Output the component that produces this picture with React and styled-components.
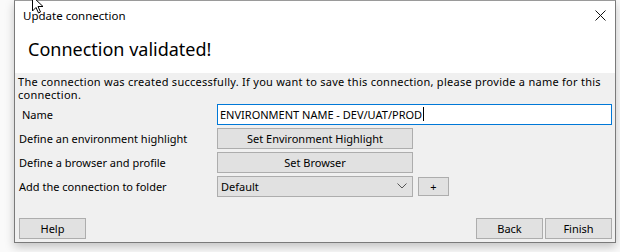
import styled, { createGlobalStyle } from "styled-components";

const Global = createGlobalStyle`
  html, body {
    margin: 0;
    padding: 0;
    background: #ffffff;
  }
  * { box-sizing: border-box; }
`;

const Page = styled.div`
  width: 620px;
  height: 252px;
  padding-left: 14px;
  position: relative;
  overflow: hidden;
  background: #fafafa;
`;

const Window = styled.div`
  width: 602px;
  height: 243px;
  border: 1px solid #7a7a7a;
  border-top-color: #9a9a9a;
  display: flex;
  flex-direction: column;
  background: #f0f0f0;
  box-shadow: 0 4px 9px rgba(0, 0, 0, 0.22);
  font-family: "Noto Sans", "Open Sans", sans-serif;
  color: #000;
`;

const Header = styled.div`
  background: #fff;
  height: 72px;
  display: flex;
  flex-direction: column;
`;

const TitleBar = styled.div`
  height: 31px;
  display: flex;
  align-items: center;
  justify-content: space-between;
  padding: 0 9px 2px 8px;
  font-size: 11.5px;
`;

const CloseX = styled.svg`
  width: 11px;
  height: 11px;
`;

const Heading = styled.h1`
  margin: 0;
  padding: 4px 0 0 13px;
  font-size: 18px;
  font-weight: 400;
  line-height: 26px;
`;

const Body = styled.div`
  flex: 1;
  display: flex;
  flex-direction: column;
  padding: 2px 3px 3px 3px;
  font-size: 11px;
`;

const Description = styled.p`
  margin: 0;
  line-height: 13px;
  height: 27px;
  letter-spacing: 0.26px;
`;

const Form = styled.div`
  display: grid;
  grid-template-columns: 199px 1fr;
  grid-auto-rows: 24px;
  align-items: center;
`;

const Label = styled.div`
  padding-left: ${(p) => (p.$indent ? 4 : 1)}px;
`;

const Controls = styled.div`
  display: flex;
  align-items: center;
  gap: 5px;
`;

const TextInput = styled.div`
  flex: 1;
  height: 21px;
  border: 1px solid #0078d7;
  background: #fff;
  display: flex;
  align-items: center;
  padding-left: 2px;
  font-size: 11px;
`;

const Caret = styled.span`
  display: inline-block;
  width: 1px;
  height: 14px;
  background: #000;
  margin-left: 1px;
`;

const Button = styled.div`
  width: ${(p) => p.$w}px;
  height: ${(p) => p.$h || 21}px;
  border: 1px solid #adadad;
  background: #e1e1e1;
  display: flex;
  align-items: center;
  justify-content: center;
  font-size: 11px;
`;

const Select = styled.div`
  width: 196px;
  height: 21px;
  border: 1px solid #adadad;
  background: #e1e1e1;
  display: flex;
  align-items: center;
  justify-content: space-between;
  padding: 0 5px 0 3px;
`;

const Footer = styled.div`
  margin-top: auto;
  display: flex;
  align-items: center;
  padding-left: 1px;
`;

const FooterRight = styled.div`
  margin-left: auto;
  display: flex;
  gap: 2px;
`;

const Cursor = styled.svg`
  position: absolute;
  left: 32px;
  top: -4px;
  width: 14px;
  height: 18px;
`;

export default function App() {
  return (
    <Page>
      <Global />
      <Window>
        <Header>
          <TitleBar>
            <span>Update connection</span>
            <CloseX viewBox="0 0 11 11">
              <path d="M0.5 0.5 L10.5 10.5 M10.5 0.5 L0.5 10.5" stroke="#111" strokeWidth="1" />
            </CloseX>
          </TitleBar>
          <Heading>Connection validated!</Heading>
        </Header>
        <Body>
          <Description>
            The connection was created successfully. If you want to save this connection, please provide a name for this
            connection.
          </Description>
          <Form>
            <Label $indent>Name</Label>
            <Controls>
              <TextInput>
                ENVIRONMENT NAME - DEV/UAT/PROD
                <Caret />
              </TextInput>
            </Controls>
            <Label>Define an environment highlight</Label>
            <Controls>
              <Button $w={196}>Set Environment Highlight</Button>
            </Controls>
            <Label>Define a browser and profile</Label>
            <Controls>
              <Button $w={196}>Set Browser</Button>
            </Controls>
            <Label>Add the connection to folder</Label>
            <Controls>
              <Select>
                <span>Default</span>
                <svg width="10" height="6" viewBox="0 0 10 6">
                  <path d="M0.5 0.5 L5 5 L9.5 0.5" fill="none" stroke="#555" strokeWidth="1" />
                </svg>
              </Select>
              <Button $w={31} $h={19}>+</Button>
            </Controls>
          </Form>
          <Footer>
            <Button $w={67}>Help</Button>
            <FooterRight>
              <Button $w={67}>Back</Button>
              <Button $w={67}>Finish</Button>
            </FooterRight>
          </Footer>
        </Body>
      </Window>
      <Cursor viewBox="0 0 14 18">
        <path d="M0.5 0.5 L0.5 15 L4 11.5 L6.5 17 L8.5 16 L6 10.5 L11 10.5 Z" fill="#fff" stroke="#000" strokeWidth="1" />
      </Cursor>
    </Page>
  );
}
